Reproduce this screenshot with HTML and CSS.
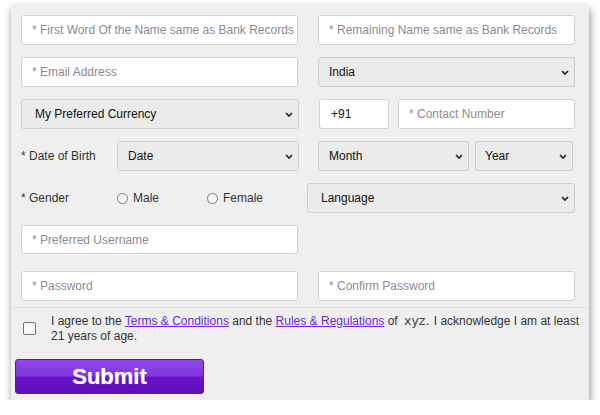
FILE: index.html
```html
<!DOCTYPE html>
<html>
<head>
<meta charset="utf-8">
<link rel="stylesheet" href="styles.css">
</head>
<body>
<form class="panel">
  <div class="row">
    <input class="field w-left" placeholder="* First Word Of the Name same as Bank Records">
    <input class="field w-right" placeholder="* Remaining Name same as Bank Records">
  </div>
  <div class="row">
    <input class="field w-left" placeholder="* Email Address">
    <div class="sel w-right"><select><option>India</option></select><svg class="chev" viewBox="0 0 8 5"><path d="M1 1l3 3 3-3"/></svg></div>
  </div>
  <div class="row">
    <div class="sel w-cur"><select class="pad-l"><option>My Preferred Currency</option></select><svg class="chev" viewBox="0 0 8 5"><path d="M1 1l3 3 3-3"/></svg></div>
    <div class="phone">
      <input class="field w-code code" value="+91">
      <input class="field w-contact" placeholder="* Contact Number">
    </div>
  </div>
  <div class="row">
    <div class="w-cur dob">
      <span class="label">* Date of Birth</span>
      <div class="sel w-date"><select><option>Date</option></select><svg class="chev" viewBox="0 0 8 5"><path d="M1 1l3 3 3-3"/></svg></div>
    </div>
    <div class="my">
      <div class="sel w-month"><select><option>Month</option></select><svg class="chev" viewBox="0 0 8 5"><path d="M1 1l3 3 3-3"/></svg></div>
      <div class="sel w-year"><select class="pad-s"><option>Year</option></select><svg class="chev" viewBox="0 0 8 5"><path d="M1 1l3 3 3-3"/></svg></div>
    </div>
  </div>
  <div class="row gender-row">
    <div class="gender">
      <span class="label">* Gender</span>
      <label class="radio r-male"><input type="radio" name="g"> Male</label>
      <label class="radio"><input type="radio" name="g"> Female</label>
    </div>
    <div class="sel w-lang"><select><option>Language</option></select><svg class="chev" viewBox="0 0 8 5"><path d="M1 1l3 3 3-3"/></svg></div>
  </div>
  <div class="row r-user">
    <input class="field w-left user" placeholder="* Preferred Username">
  </div>
  <div class="row r-pass">
    <input class="field w-left" type="password" placeholder="* Password">
    <input class="field w-right" type="password" placeholder="* Confirm Password">
  </div>
  <div class="sep"></div>
  <div class="agree">
    <input type="checkbox" class="check">
    <p><span>I agree to the </span><a href="#">Terms &amp; Conditions</a><span> and the </span><a href="#">Rules &amp; Regulations</a><span> of </span><span class="xyz">xyz.</span><span> I acknowledge I am at least</span><br><span>21 years of age.</span></p>
  </div>
  <button type="button" class="submit">Submit</button>
</form>
</body>
</html>
```
FILE: styles.css
```css
* { box-sizing: border-box; }
html, body { margin: 0; padding: 0; background: #fff; }
body { font-family: "Liberation Sans", Arial, sans-serif; font-size: 12px; color: #333; }

.panel {
  margin: 5px 0 0 11px;
  width: 578px;
  height: 395px;
  background: #efefef;
  padding: 10px 14px 0 10px;
  box-shadow: 1px 4px 8px rgba(0,0,0,0.45);
  display: flex;
  flex-direction: column;
}

.row { display: flex; justify-content: space-between; align-items: center; height: 30px; margin-bottom: 12px; flex: none; }
.r-user { height: 29px; margin-bottom: 17px; }
.r-pass { margin-bottom: 6px; }

.field {
  height: 30px;
  background: #fff;
  border: 1px solid #d3d3d3;
  border-radius: 3px;
  padding: 0 2px 0 10px;
  font: 12px "Liberation Sans", Arial, sans-serif;
  color: #222;
  outline: none;
}
.user { height: 29px; }
.field::placeholder { color: #8e8a93; }
.code { padding-left: 11px; color: #111; }

.w-left { width: 277px; }
.w-right { width: 257px; }
.w-cur { width: 278px; }
.w-code { width: 70px; }
.w-contact { width: 177px; }
.w-date { width: 182px; }
.w-month { width: 151px; }
.w-year { width: 98px; }
.w-lang { width: 268px; }

.phone { display: flex; gap: 9px; width: 256px; }
.dob { display: flex; align-items: center; }
.dob .label { width: 96px; }
.my { display: flex; gap: 6px; width: 255px; margin-right: 2px; }

.label { color: #333; font-size: 12px; }

.sel { position: relative; height: 30px; }
.sel select {
  appearance: none;
  -webkit-appearance: none;
  width: 100%;
  height: 100%;
  background: #ebebeb;
  border: 1px solid #cfcfcf;
  border-radius: 3px;
  padding: 0 10px;
  font: 12px "Liberation Sans", Arial, sans-serif;
  color: #111;
  outline: none;
}
.sel select.pad-l { padding-left: 13px; }
.sel select.pad-s { padding-left: 9px; }
.w-lang select { padding-left: 13px; }
.chev {
  position: absolute;
  right: 6px;
  top: 13px;
  width: 8px;
  height: 5px;
  pointer-events: none;
  fill: none;
  stroke: #222;
  stroke-width: 1.7;
}

.gender-row { margin-bottom: 12px; }
.gender { display: flex; align-items: center; }
.gender .label { width: 96px; }
.radio { display: flex; align-items: center; gap: 5px; color: #333; }
.r-male { width: 90px; }
.radio input {
  appearance: none;
  -webkit-appearance: none;
  margin: 0;
  width: 11px;
  height: 11px;
  border: 1.5px solid #7a7a7a;
  border-radius: 50%;
  background: #f7f7f7;
}

.sep { height: 1px; background: #e2e2e2; margin: 0 -14px 0 -10px; flex: none; }

.agree { display: flex; align-items: flex-start; margin-top: 5px; flex: none; }
.check {
  appearance: none;
  -webkit-appearance: none;
  margin: 9px 15px 0 2px;
  flex: none;
  width: 13px;
  height: 13px;
  border: 1.5px solid #767676;
  border-radius: 2px;
  background: #f7f7f7;
}
.agree p { margin: 0 -10px 0 0; line-height: 15px; color: #333; font-size: 12px; white-space: nowrap; }
.agree a { color: #6d28d9; text-decoration: underline; }
.xyz { font-family: "DejaVu Sans", Verdana, sans-serif; font-size: 12.5px; color: #444; margin: 0 1px 0 3px; }

.submit {
  flex: none;
  margin: 15px 0 0 -6px;
  width: 189px;
  height: 35px;
  border: 1px solid #5a14b0;
  border-radius: 3px;
  background: linear-gradient(#9048e8 0%, #8038dd 48%, #6a14c8 52%, #5c0db8 100%);
  color: #fff;
  font: bold 22px "Liberation Sans", Arial, sans-serif;
  text-shadow: 0 0 1px rgba(255,255,255,0.6);
  padding: 0;
  cursor: pointer;
}
```
